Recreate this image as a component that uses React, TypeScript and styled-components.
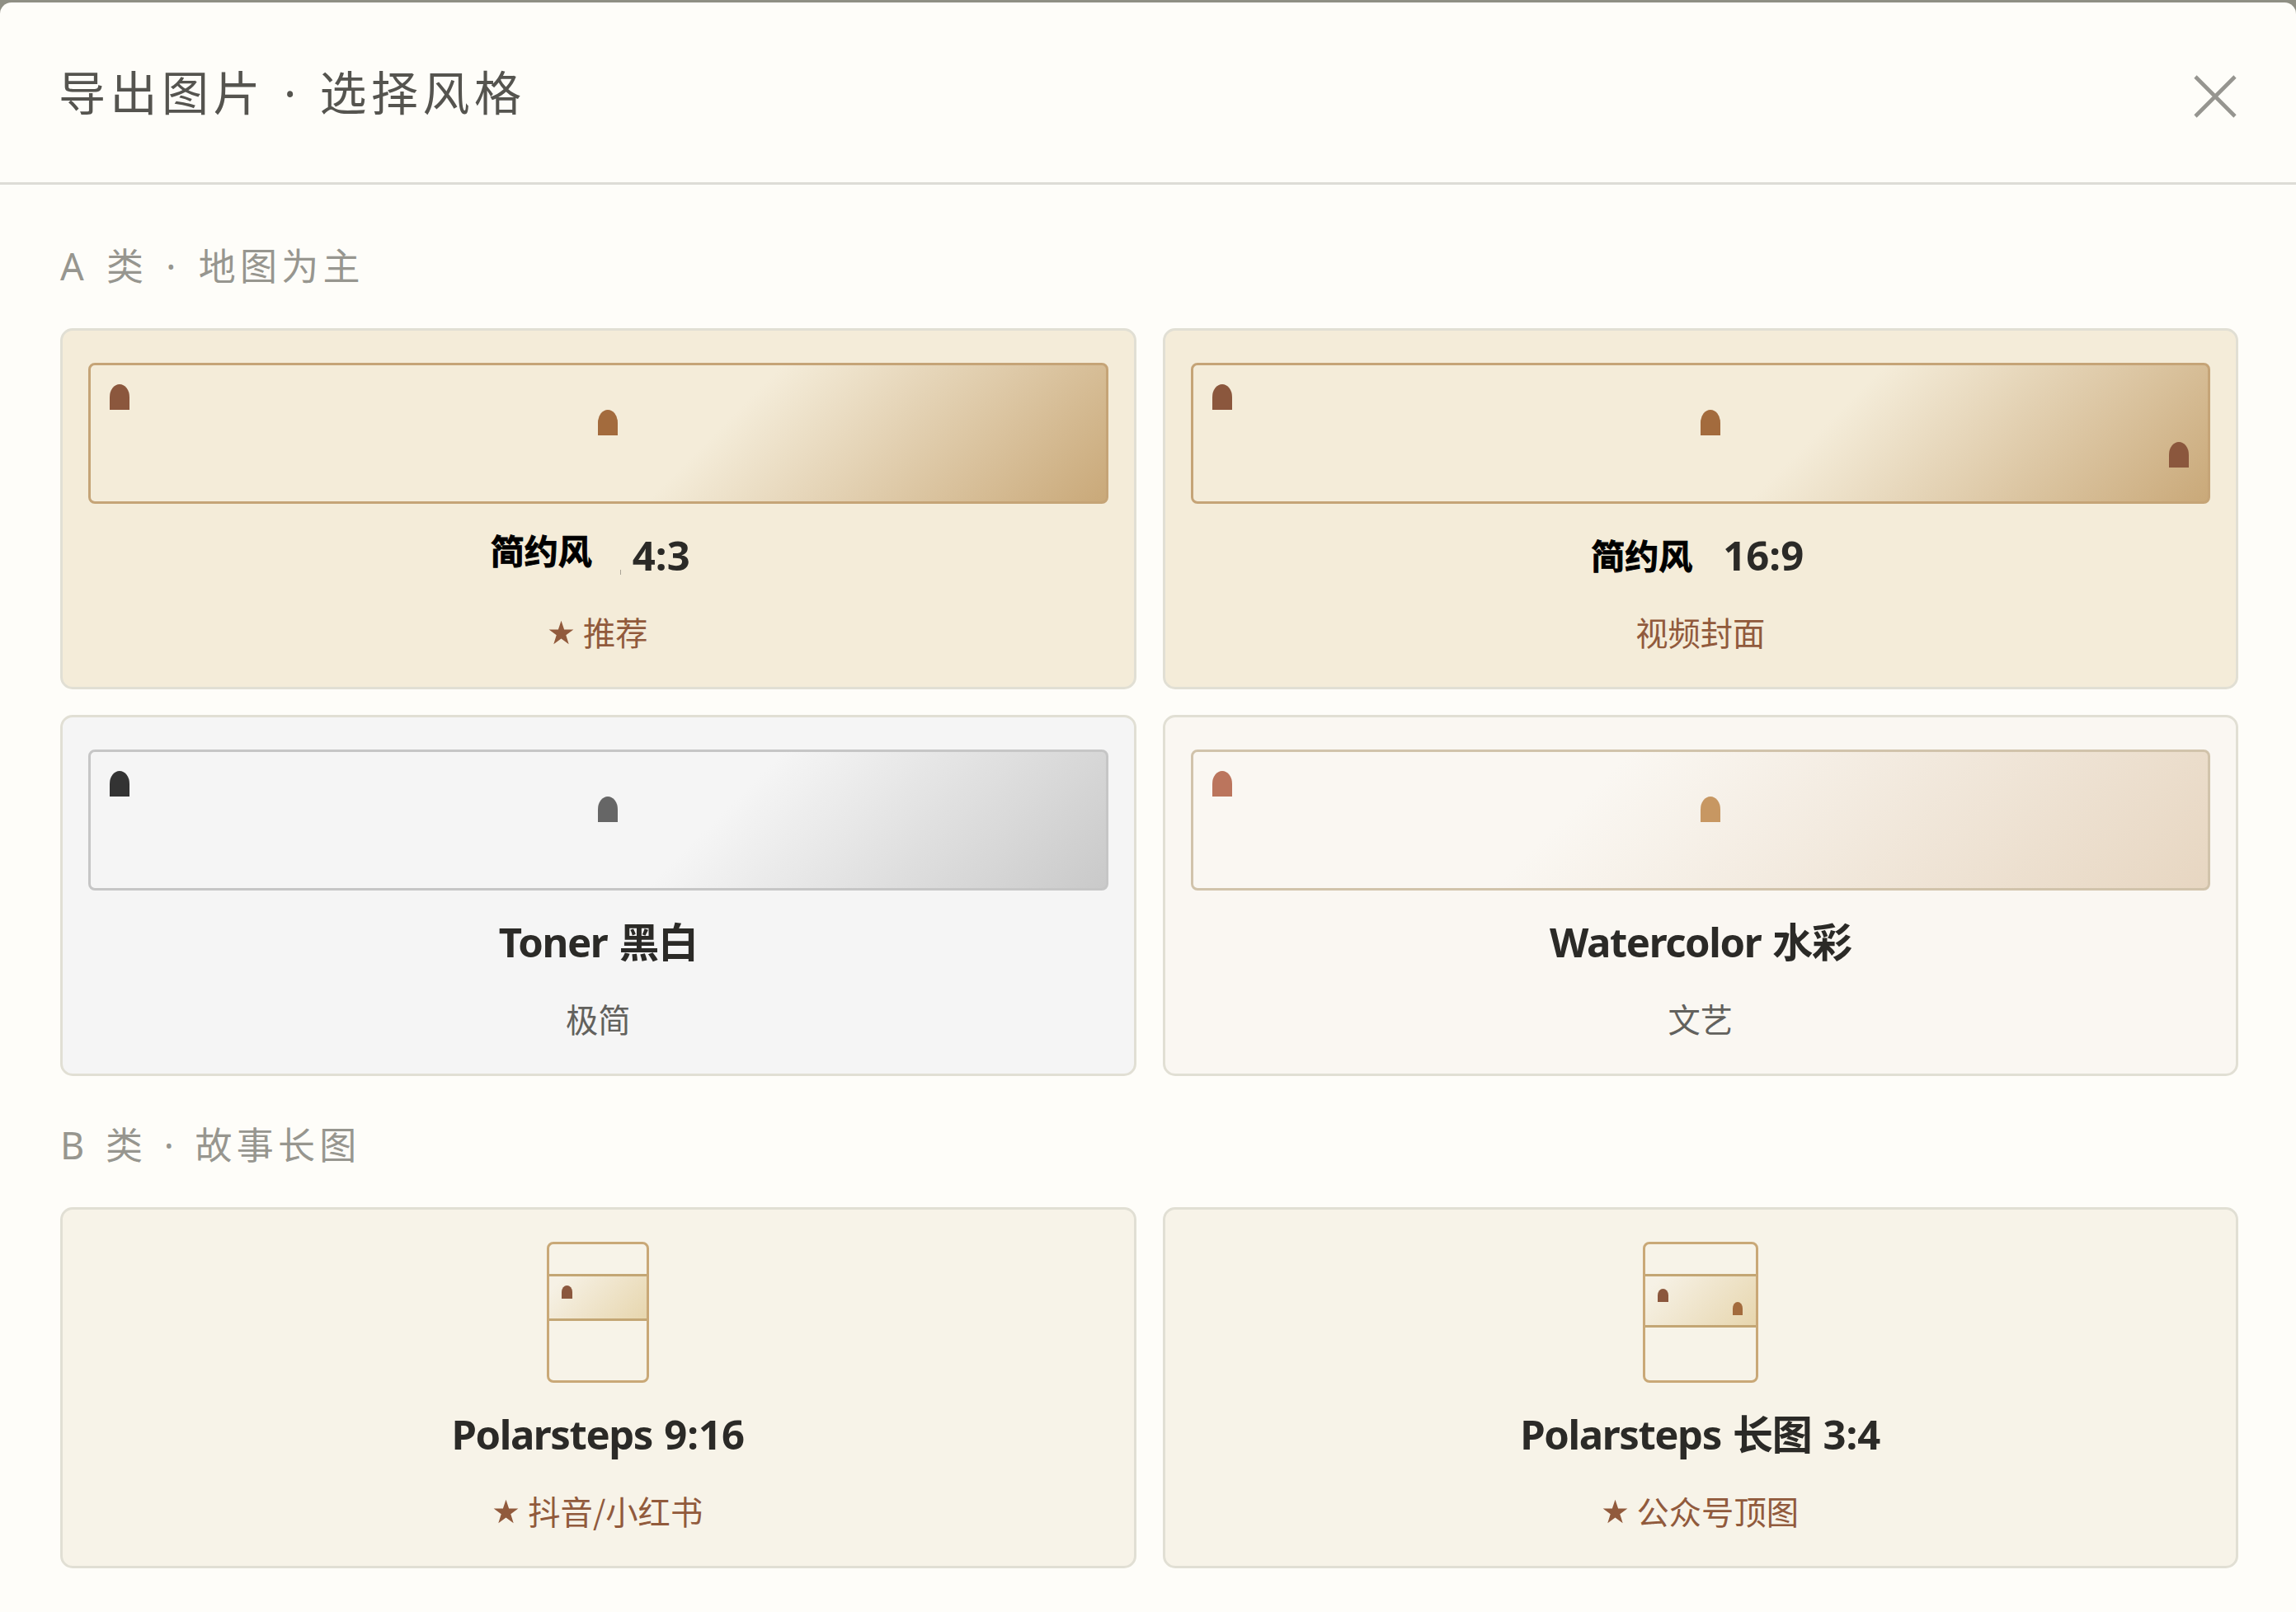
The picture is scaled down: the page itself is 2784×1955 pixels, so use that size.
import React from "react";
import styled, { createGlobalStyle } from "styled-components";

const Global = createGlobalStyle`
  * { box-sizing: border-box; }
  html, body { margin: 0; padding: 0; background: #8f8f84; }
  h1, h2, p { margin: 0; font-weight: 400; }
`;

const Sheet = styled.main`
  width: 2784px;
  height: 1952px;
  margin-top: 3px;
  overflow: hidden;
  border-radius: 14px 14px 0 0;
  background: #fefdf9;
  color: #2b2a27;
  font-family: "Noto Sans", "Noto Sans CJK SC", sans-serif;
  display: flow-root;
`;

const Header = styled.header`
  display: flex;
  align-items: center;
  justify-content: space-between;
  height: 221px;
  padding: 0 72px 0 71px;
  border-bottom: 3px solid #dddcd6;
`;

const Title = styled.h1`
  font-size: 57px;
  line-height: 80px;
  letter-spacing: 5.5px;
  word-spacing: 2.6px;
  color: #55544f;
`;

const Close = styled.button`
  display: grid;
  place-items: center;
  width: 52px;
  height: 52px;
  margin-top: 9px;
  padding: 0;
  border: 0;
  background: none;
  color: #969590;
`;

const Body = styled.div`
  padding: 0 70px 0 73px;
`;

const Category = styled.h2<{ $top: number; $space: number }>`
  padding-top: ${(p) => p.$top}px;
  height: ${(p) => p.$top + 105}px;
  font-size: 45px;
  line-height: 60px;
  letter-spacing: 5.3px;
  word-spacing: ${(p) => p.$space}px;
  color: #97968f;
`;

const Grid = styled.div`
  display: grid;
  grid-template-columns: 1fr 1fr;
  gap: 31px 32px;
`;

const Card = styled.article<{ $bg: string }>`
  display: flex;
  flex-direction: column;
  align-items: center;
  height: 438px;
  padding: 39px 31px 0;
  border: 3px solid #e1dfd4;
  border-radius: 15px;
  background: ${(p) => p.$bg};
`;

const Thumb = styled.div<{ $line: string; $fill?: string; $w?: number }>`
  position: relative;
  flex: none;
  width: ${(p) => (p.$w ? `${p.$w}px` : "100%")};
  height: 171px;
  border: 3px solid ${(p) => p.$line};
  border-radius: 8px;
  background: ${(p) => p.$fill ?? "transparent"};
  background-origin: border-box;
`;

const Band = styled.div<{ $h: number }>`
  position: relative;
  height: ${(p) => p.$h}px;
  margin-top: 36px;
  border: solid #c3a674;
  border-width: 3px 0;
  background: linear-gradient(135deg, #f6f1e5 10%, #e7d6ae 100%);
`;

const Pin = styled.i<{ $color: string; $x: string; $y: string; $w?: number; $h?: number }>`
  position: absolute;
  left: ${(p) => p.$x};
  top: ${(p) => p.$y};
  width: ${(p) => p.$w ?? 24}px;
  height: ${(p) => p.$h ?? 31}px;
  border-radius: 50% 50% 0 0;
  background: ${(p) => p.$color};
`;

const Name = styled.p<{ $shift?: number }>`
  display: flex;
  align-items: baseline;
  flex: none;
  height: 68px;
  margin-top: 28px;
  padding-right: ${(p) => p.$shift ?? 0}px;
  font-size: 49px;
  font-weight: 700;
  line-height: 68px;
  white-space: pre;
`;

const Word = styled.span`
  letter-spacing: -1.4px;
  word-spacing: 2.8px;
`;

const Style = styled.span<{ $gap: number; $lift: number }>`
  position: relative;
  top: ${(p) => -p.$lift}px;
  margin-right: ${(p) => p.$gap}px;
  font-size: 41px;
  color: #000;
  -webkit-text-stroke: 0.9px #000;
`;

/* Faint tick just ahead of the ratio */
const Tick = styled.i`
  position: absolute;
  right: -35px;
  bottom: 5px;
  width: 1px;
  height: 6px;
  background: #a9a496;
`;

const Note = styled.p<{ $muted?: boolean }>`
  display: flex;
  align-items: center;
  gap: 11px;
  margin-top: 33px;
  font-family: "Noto Sans CJK SC", sans-serif;
  font-size: 39.3px;
  line-height: 52px;
  color: ${(p) => (p.$muted ? "#62615d" : "#915a3c")};
`;

const StarIcon = styled.svg`
  width: 31px;
  height: 31px;
  margin-top: 3px;
`;

const Star = () => (
  <StarIcon viewBox="0 0 30 30" aria-hidden="true">
    <path
      fill="currentColor"
      d="M15 .8 18.5 11.2H29.4L20.6 17.6 23.9 28.3 15 21.8 6.1 28.3 9.4 17.6.6 11.2H11.5Z"
    />
  </StarIcon>
);

const BROWN = "#8b573d";
const OCHRE = "#a36b3d";
const SAND = "linear-gradient(135deg, #f4ecd9 60%, #c9a878 100%)";

export default function App() {
  return (
    <>
      <Global />
      <Sheet>
        <Header>
          <Title>导出图片 · 选择风格</Title>
          <Close aria-label="关闭">
            <svg width="52" height="52" viewBox="0 0 52 52" fill="none" stroke="currentColor" strokeWidth="4.6">
              <path d="M2 2 50 50M50 2 2 50" />
            </svg>
          </Close>
        </Header>
        <Body>
          <Category $top={69} $space={5}>A 类 · 地图为主</Category>
          <Grid>
            <Card $bg="#f4ecd9">
              <Thumb $line="#c5a477" $fill={SAND}>
                <Pin $color={BROWN} $x="23px" $y="23px" />
                <Pin $color={OCHRE} $x="50%" $y="54px" />
              </Thumb>
              <Name $shift={19}>
                <Style $gap={49} $lift={8}>简约风<Tick /></Style>4:3
              </Name>
              <Note><Star />推荐</Note>
            </Card>
            <Card $bg="#f4ecd9">
              <Thumb $line="#c5a477" $fill={SAND}>
                <Pin $color={BROWN} $x="23px" $y="23px" />
                <Pin $color={OCHRE} $x="50%" $y="54px" />
                <Pin $color={BROWN} $x="1183px" $y="93px" />
              </Thumb>
              <Name $shift={7}>
                <Style $gap={37} $lift={2}>简约风</Style>16:9
              </Name>
              <Note>视频封面</Note>
            </Card>
            <Card $bg="#f5f5f5">
              <Thumb $line="#c6c6c6" $fill="linear-gradient(135deg, #f5f5f5 60%, #c9c9c9 100%)">
                <Pin $color="#333333" $x="23px" $y="23px" />
                <Pin $color="#666666" $x="50%" $y="54px" />
              </Thumb>
              <Name><Word>Toner 黑白</Word></Name>
              <Note $muted>极简</Note>
            </Card>
            <Card $bg="#faf7f2">
              <Thumb $line="#d1c3ab" $fill="linear-gradient(135deg, #faf7f2 38%, #e7d6c1 100%)">
                <Pin $color="#bb755d" $x="23px" $y="23px" />
                <Pin $color="#c79762" $x="50%" $y="54px" />
              </Thumb>
              <Name><Word>Watercolor 水彩</Word></Name>
              <Note $muted>文艺</Note>
            </Card>
          </Grid>
          <Category $top={54} $space={3.4}>B 类 · 故事长图</Category>
          <Grid>
            <Card $bg="#f7f3e8">
              <Thumb $line="#c9a877" $w={124}>
                <Band $h={57}>
                  <Pin $color={BROWN} $x="15px" $y="11px" $w={13} $h={16} />
                </Band>
              </Thumb>
              <Name><Word>Polarsteps </Word>9:16</Name>
              <Note><Star />抖音/小红书</Note>
            </Card>
            <Card $bg="#f7f3e8">
              <Thumb $line="#c9a877" $w={140}>
                <Band $h={65}>
                  <Pin $color={BROWN} $x="15px" $y="15px" $w={13} $h={16} />
                  <Pin $color={OCHRE} $x="106px" $y="31px" $w={12} $h={16} />
                </Band>
              </Thumb>
              <Name><Word>Polarsteps 长图 </Word>3:4</Name>
              <Note><Star />公众号顶图</Note>
            </Card>
          </Grid>
        </Body>
      </Sheet>
    </>
  );
}
